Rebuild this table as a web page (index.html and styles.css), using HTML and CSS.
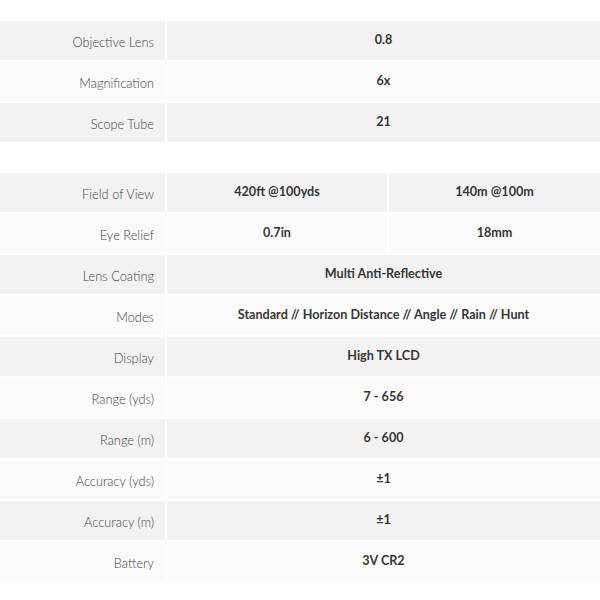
FILE: index.html
```html
<!DOCTYPE html>
<html>
<head>
<meta charset="utf-8">
<link rel="stylesheet" href="styles.css">
</head>
<body>
<div class="page">
  <div class="spec">
    <div class="row dark"><div class="label">Objective Lens</div><div class="val">0.8</div></div>
    <div class="row light"><div class="label">Magnification</div><div class="val">6x</div></div>
    <div class="row dark"><div class="label">Scope Tube</div><div class="val">21</div></div>
  </div>
  <div class="spec">
    <div class="row dark split"><div class="label">Field of View</div><div class="val">420ft @100yds</div><div class="val">140m @100m</div></div>
    <div class="row light split"><div class="label">Eye Relief</div><div class="val">0.7in</div><div class="val">18mm</div></div>
    <div class="row dark"><div class="label">Lens Coating</div><div class="val">Multi Anti-Reflective</div></div>
    <div class="row light"><div class="label">Modes</div><div class="val">Standard // Horizon Distance // Angle // Rain // Hunt</div></div>
    <div class="row dark"><div class="label">Display</div><div class="val">High TX LCD</div></div>
    <div class="row light"><div class="label">Range (yds)</div><div class="val">7 - 656</div></div>
    <div class="row dark"><div class="label">Range (m)</div><div class="val">6 - 600</div></div>
    <div class="row light"><div class="label">Accuracy (yds)</div><div class="val">±1</div></div>
    <div class="row dark"><div class="label">Accuracy (m)</div><div class="val">±1</div></div>
    <div class="row light"><div class="label">Battery</div><div class="val">3V CR2</div></div>
  </div>
</div>
</body>
</html>
```
FILE: styles.css
```css
html, body {
  margin: 0;
  padding: 0;
  background: #ffffff;
}
.page {
  width: 600px;
  padding-top: 21px;
  display: flex;
  flex-direction: column;
  gap: 31px;
  font-family: Lato, "Open Sans", sans-serif;
}
.spec {
  display: flex;
  flex-direction: column;
  gap: 2px;
}
.row {
  display: grid;
  grid-template-columns: 165px 1fr;
  column-gap: 2px;
  height: 39px;
}
.row.split {
  grid-template-columns: 165px 220px 1fr;
}
.row > div {
  display: flex;
  align-items: center;
}
.dark > div { background: #f2f2f2; }
.light > div { background: #fafafa; }
.label {
  justify-content: flex-end;
  padding-right: 11px;
  padding-top: 2px;
  font-size: 12.8px;
  font-weight: 300;
  color: #444;
}
.val {
  justify-content: center;
  padding-bottom: 3px;
  font-size: 12.6px;
  font-weight: 700;
  color: #363636;
}
```
